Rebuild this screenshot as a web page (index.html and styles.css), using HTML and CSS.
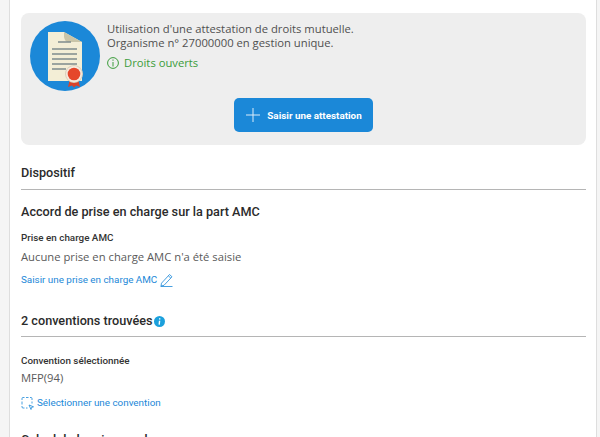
FILE: index.html
```html
<!DOCTYPE html>
<html lang="fr">
<head>
    <meta charset="UTF-8">
    <meta name="viewport" content="width=device-width, initial-scale=1.0">
    <title>Dispositif</title>
    <link rel="stylesheet" href="styles.css">
</head>
<body>
    <div class="page">
        <div class="attestation">
            <div class="attestation-top">
                <svg class="doc-logo" width="70" height="70" viewBox="0 0 70 70">
                    <circle cx="35" cy="35" r="35" fill="#1b88d8"/>
                    <path d="M18 11H34L52 21V60H18Z" fill="#f3eed6"/>
                    <path d="M34 11L52 21H38Q35 21 34 16Z" fill="#c9c5a8"/>
                    <path d="M28 21H41M22 28H47M22 33H47M22 38H47M22 43H47M22 48H36" stroke="#7f8c8d" stroke-width="1.6"/>
                    <path d="M40 58L38 66L42 64.5L44 66.5L46 64.5L50 66L48 58Z" fill="#d9412a"/>
                    <circle cx="44" cy="53" r="9" fill="#d9d0bb"/>
                    <circle cx="44" cy="53" r="8" fill="#f7e9dc"/>
                    <circle cx="44" cy="53" r="6.3" fill="#e5472a"/>
                </svg>
                <div class="attestation-text">
                    <p>Utilisation d'une attestation de droits mutuelle.</p>
                    <p>Organisme n° 27000000 en gestion unique.</p>
                    <div class="status">
                        <svg width="12" height="12" viewBox="0 0 12 12" fill="none" stroke="#3a9c3a">
                            <circle cx="6" cy="6" r="5.4"/>
                            <path d="M6 5V9.5M6 2.5V3.8"/>
                        </svg>
                        <span>Droits ouverts</span>
                    </div>
                </div>
            </div>
            <div class="attestation-action">
                <button class="btn-primary" type="button">
                    <svg width="16" height="16" viewBox="0 0 16 16" stroke="#dcecf9">
                        <path d="M8 1V15M1 8H15"/>
                    </svg>
                    Saisir une attestation
                </button>
            </div>
        </div>

        <h2 class="section-title">Dispositif</h2>
        <h3 class="sub-title">Accord de prise en charge sur la part AMC</h3>
        <div class="field-label">Prise en charge AMC</div>
        <div class="field-value">Aucune prise en charge AMC n'a été saisie</div>
        <a class="link" href="#">
            Saisir une prise en charge AMC
            <svg width="13" height="14" viewBox="0 0 13 14" fill="none" stroke="#1b88d8" stroke-width="0.8">
                <path d="M1.5 10.2L9.5 1.5L12 3.8L4 12.3L1 13Z"/>
                <path d="M8.3 2.8L10.8 5.1M0.5 13.5H12.5"/>
            </svg>
        </a>

        <h2 class="section-title section-title-second">
            2 conventions trouvées
            <svg class="info-icon" width="11" height="11" viewBox="0 0 11 11">
                <circle cx="5.5" cy="5.5" r="5.5" fill="#1ba0dc"/>
                <path d="M5.7 2.2V3.4M5.6 4.8L5.2 8.6" stroke="#fff" stroke-width="1.4"/>
            </svg>
        </h2>
        <div class="field-label">Convention sélectionnée</div>
        <div class="field-value field-value-second">MFP(94)</div>
        <a class="link link-second" href="#">
            <svg width="13" height="13" viewBox="0 0 13 13" fill="none" stroke="#1b88d8" stroke-width="0.8">
                <path d="M1 3V1.5Q1 .5 2 .5H3.5M5 .5H7.5M9 .5H10Q11 .5 11 1.5V3M11 4.5V6.5M1 4.5V7.5M1 9V10Q1 11 2 11H3.5M5 11H6.5"/>
                <path d="M8 8L12.5 9.8L10.5 10.5L10 12.5Z" fill="#fff"/>
            </svg>
            Sélectionner une convention
        </a>

        <h3 class="sub-title sub-title-last">Calcul de la prise en charge</h3>
    </div>
</body>
</html>
```

FILE: styles.css
```css
html, body {
    margin: 0;
    height: 437px;
    overflow: hidden;
}
body {
    font-family: 'Roboto', sans-serif;
    background: #f5f5f5;
}
.page {
    box-sizing: border-box;
    height: 437px;
    margin: 0 3px 0 9px;
    padding: 13px 10px 0 11px;
    background: white;
    border-left: 1px solid #dedede;
    border-right: 1px solid #dedede;
    overflow: hidden;
}
.attestation {
    box-sizing: border-box;
    height: 132px;
    padding: 8px 9px;
    background: #eeeeee;
    border-radius: 8px;
}
.attestation-top {
    display: flex;
    gap: 7px;
}
.attestation-text {
    padding-top: 1px;
    font-family: 'Open Sans', sans-serif;
    font-size: 11.25px;
    line-height: 14px;
    color: #505050;
}
.attestation-text p {
    margin: 0;
}
.status {
    display: flex;
    align-items: center;
    gap: 5px;
    margin-top: 6px;
    color: #3a9c3a;
}
.attestation-action {
    display: flex;
    justify-content: center;
    margin-top: 7px;
}
.btn-primary {
    display: flex;
    align-items: center;
    gap: 6px;
    height: 34px;
    padding: 0 11px;
    background: #1b88d8;
    color: white;
    border: none;
    border-radius: 5px;
    font-family: 'Roboto', sans-serif;
    font-size: 9.85px;
    font-weight: 700;
}
.section-title {
    margin: 20px 0 0;
    padding-bottom: 8px;
    border-bottom: 1px solid #b5b5b5;
    font-size: 12.66px;
    line-height: 16px;
    font-weight: 500;
    color: #2b2b2b;
}
.section-title-second {
    margin-top: 26px;
    margin-bottom: 17px;
    padding-bottom: 7px;
    display: flex;
    align-items: center;
    gap: 1px;
}
.sub-title {
    margin: 14px 0 11px;
    font-size: 12.66px;
    line-height: 16px;
    font-weight: 500;
    color: #2b2b2b;
}
.sub-title-last {
    margin-top: 22px;
}
.field-label {
    font-size: 9.85px;
    line-height: 13px;
    font-weight: 500;
    color: #333;
}
.field-value {
    margin-top: 5px;
    font-family: 'Open Sans', sans-serif;
    font-size: 11.25px;
    line-height: 16px;
    color: #5a5a5a;
}
.field-value-second {
    margin-top: 3px;
}
.link {
    display: flex;
    align-items: center;
    gap: 3px;
    margin-top: 8px;
    font-size: 9.85px;
    line-height: 14px;
    color: #1b88d8;
    text-decoration: none;
}
.link-second {
    margin-top: 10px;
}
```
